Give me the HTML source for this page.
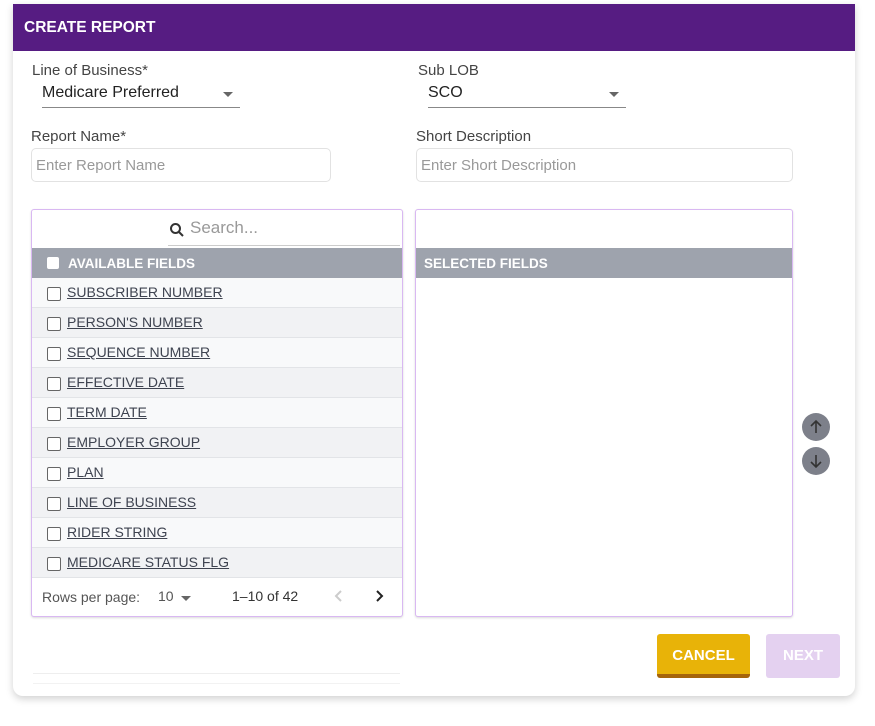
<!DOCTYPE html>
<html><head><style>
*{box-sizing:border-box;margin:0;padding:0}
body{width:875px;height:726px;background:#fff;font-family:"Liberation Sans",sans-serif;position:relative;overflow:hidden}
.card{position:absolute;left:13px;top:4px;width:842px;height:692px;background:#fff;border-radius:0 0 10px 10px;box-shadow:0 3px 8px rgba(0,0,0,.18)}
.hdr{position:absolute;left:13px;top:4px;width:842px;height:47px;background:#561c82;color:#fff;font-weight:bold;font-size:15.5px;padding:15px 0 0 11px}
.lbl{position:absolute;font-size:15px;color:#444}
.sel{position:absolute;font-size:16px;color:#222;border-bottom:1px solid #888;height:26px;padding-top:2px}
.sel:after{content:"";position:absolute;right:7px;top:10px;border:5px solid transparent;border-top-color:#666}
.inp{position:absolute;height:34px;border:1px solid #e2e2e2;border-radius:5px;color:#999;font-size:15px;padding:8px 0 0 4px}
.panel{position:absolute;border:1px solid #d9b8f2;border-radius:3px;box-shadow:0 1px 2px rgba(0,0,0,.15);background:#fff;overflow:hidden}
.th{position:absolute;left:0;right:0;top:38px;height:30px;background:#9ea3ad;color:#fff;font-weight:bold;font-size:13.5px;padding:8px 0 0 8px}
.row{height:30px;border-bottom:1px solid #e2e4e7;font-size:14px;color:#3e4350;text-decoration:underline;padding:6px 0 0 35px;position:relative}
.row:before,.cb{content:"";position:absolute;left:15px;top:9px;width:12px;height:12px;border:1px solid #666;border-radius:2px;background:#fff}
.circ{position:absolute;left:802px;width:28px;height:28px;border-radius:50%;background:#7d808a}
</style></head><body>
<div class="card"></div>
<div class="hdr">CREATE REPORT</div>
<div class="lbl" style="left:32px;top:62px">Line of Business*</div>
<div class="sel" style="left:42px;top:82px;width:198px">Medicare Preferred</div>
<div class="lbl" style="left:418px;top:62px">Sub LOB</div>
<div class="sel" style="left:428px;top:82px;width:198px">SCO</div>
<div class="lbl" style="left:31px;top:128px">Report Name*</div>
<div class="inp" style="left:31px;top:148px;width:300px">Enter Report Name</div>
<div class="lbl" style="left:416px;top:128px">Short Description</div>
<div class="inp" style="left:416px;top:148px;width:377px">Enter Short Description</div>

<div class="panel" style="left:31px;top:209px;width:372px;height:408px">
 <svg style="position:absolute;left:137px;top:12px" width="16" height="16" viewBox="0 0 16 16"><circle cx="6.5" cy="6.5" r="4.5" fill="none" stroke="#333" stroke-width="2"/><path d="M10 10l4 4" stroke="#333" stroke-width="2"/></svg>
 <div style="position:absolute;left:158px;top:8px;font-size:17px;color:#999">Search...</div>
 <div style="position:absolute;left:136px;top:35px;width:232px;border-bottom:1px solid #ccc"></div>
 <div class="th"><span class="cb" style="left:15px;top:9px;border-color:#fff"></span><span style="padding-left:28px">AVAILABLE FIELDS</span></div>
 <div style="position:absolute;left:0;right:0;top:68px">
  <div class="row" style="background:#f8f9fa">SUBSCRIBER NUMBER</div>
  <div class="row" style="background:#f1f2f4">PERSON'S NUMBER</div>
  <div class="row" style="background:#f8f9fa">SEQUENCE NUMBER</div>
  <div class="row" style="background:#f1f2f4">EFFECTIVE DATE</div>
  <div class="row" style="background:#f8f9fa">TERM DATE</div>
  <div class="row" style="background:#f1f2f4">EMPLOYER GROUP</div>
  <div class="row" style="background:#f8f9fa">PLAN</div>
  <div class="row" style="background:#f1f2f4">LINE OF BUSINESS</div>
  <div class="row" style="background:#f8f9fa">RIDER STRING</div>
  <div class="row" style="background:#f1f2f4">MEDICARE STATUS FLG</div>
 </div>
 <div style="position:absolute;left:10px;top:379px;font-size:14px;color:#555">Rows per page:</div>
 <div style="position:absolute;left:126px;top:378px;font-size:14px;color:#555">10</div>
 <div style="position:absolute;left:149px;top:386px;border:5px solid transparent;border-top-color:#666"></div>
 <div style="position:absolute;left:200px;top:378px;font-size:14px;color:#333">1–10 of 42</div>
 <svg style="position:absolute;left:300px;top:379px" width="14" height="14"><path d="M9 2L4 7l5 5" fill="none" stroke="#ccc" stroke-width="2"/></svg>
 <svg style="position:absolute;left:340px;top:379px" width="14" height="14"><path d="M5 2l5 5-5 5" fill="none" stroke="#222" stroke-width="2"/></svg>
</div>

<div class="panel" style="left:415px;top:209px;width:378px;height:408px">
 <div class="th">SELECTED FIELDS</div>
</div>

<div class="circ" style="top:413px"><svg width="28" height="28"><path d="M14 20V8M9 13l5-5 5 5" fill="none" stroke="#333" stroke-width="1.6"/></svg></div>
<div class="circ" style="top:447px"><svg width="28" height="28"><path d="M14 8v12M9 15l5 5 5-5" fill="none" stroke="#333" stroke-width="1.6"/></svg></div>

<div style="position:absolute;left:657px;top:634px;width:93px;height:44px;background:#e8b308;border-bottom:4px solid #a5640a;border-radius:3px;color:#fff;font-weight:bold;font-size:15px;text-align:center;padding-top:13px">CANCEL</div>
<div style="position:absolute;left:766px;top:634px;width:74px;height:44px;background:#e4d1f0;border-radius:3px;color:#fff;font-weight:bold;font-size:15px;text-align:center;padding-top:13px">NEXT</div>
<div style="position:absolute;left:33px;top:673px;width:367px;border-top:1px solid #eee"></div>
<div style="position:absolute;left:33px;top:683px;width:367px;border-top:1px solid #f2f2f2"></div>
</body></html>
